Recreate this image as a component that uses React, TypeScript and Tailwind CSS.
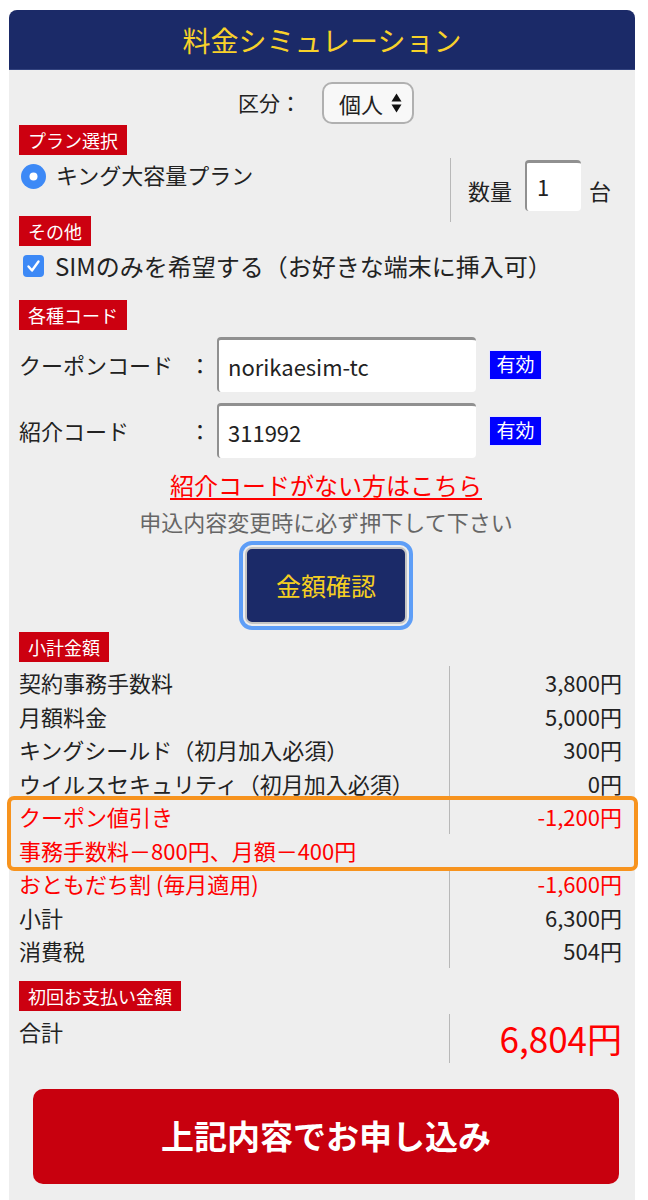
import React from "react";

function Badge({ children }: { children: React.ReactNode }) {
  return (
    <div className="h-[30px] w-fit bg-[#cc0010] px-[9px] text-[18px] leading-[30px] text-white">
      {children}
    </div>
  );
}

function Valid() {
  return (
    <div className="ml-[13px] flex h-[30px] w-[53px] items-center justify-center border border-[#e6e6ff] bg-[#0000ff] text-[19px] text-white">
      有効
    </div>
  );
}

function CodeRow({ label, value }: { label: string; value: string }) {
  return (
    <div className="flex h-[55px] items-center">
      <span className="w-[170px]">{label}</span>
      <span className="w-[22px] text-center">：</span>
      <div className="ml-[6px] flex h-[55px] w-[259px] items-center rounded-[4px] border-t-[3px] border-l-[2px] border-[#909090] bg-white pl-[9px]">
        {value}
      </div>
      <Valid />
    </div>
  );
}

type Row = { label: string; value?: string; red?: boolean; full?: boolean };

function SumRow({ label, value, red, full }: Row) {
  const color = red ? "text-[#ff0000]" : "text-[#222]";
  if (full) {
    return (
      <div className={`flex h-[33.5px] items-center ${color}`}>{label}</div>
    );
  }
  return (
    <div className={`flex h-[33.5px] ${color}`}>
      <div className="flex w-[431px] items-center border-r border-[#b8b8b8]">
        {label}
      </div>
      <div className="flex flex-1 items-center justify-end">{value}</div>
    </div>
  );
}

export default function App() {
  const top: Row[] = [
    { label: "契約事務手数料", value: "3,800円" },
    { label: "月額料金", value: "5,000円" },
    { label: "キングシールド（初月加入必須）", value: "300円" },
    { label: "ウイルスセキュリティ（初月加入必須）", value: "0円" },
  ];
  const bottom: Row[] = [
    { label: "おともだち割 (毎月適用)", value: "-1,600円", red: true },
    { label: "小計", value: "6,300円" },
    { label: "消費税", value: "504円" },
  ];

  return (
    <div className="min-h-[1200px] bg-white pt-[10px] font-['Noto_Sans_CJK_JP',sans-serif] text-[22px] text-[#222]">
      <div className="mx-[9px] w-[626px] rounded-t-[8px] bg-[#eeeeee] pb-[17px]">
        {/* Header */}
        <div className="flex h-[60px] items-center justify-center rounded-t-[8px] border-b border-[#33437f] bg-[#1b2a68] text-[28px] text-[#f8d12a]">
          料金シミュレーション
        </div>

        <div className="pl-[10px] pr-[2px]">
          {/* 区分 */}
          <div className="mt-[12px] flex h-[42px] items-center justify-center">
            <span className="text-[21px]">区分：</span>
            <div className="ml-[21px] flex h-[42px] w-[92px] items-center rounded-[10px] border-2 border-[#b0b0b0] bg-[#f8f8f8] pl-[15px]">
              <span>個人</span>
              <svg className="ml-[8px]" width="11" height="20" viewBox="0 0 11 20">
                <path d="M0.5 8.5 L5.5 0.5 L10.5 8.5 Z" fill="#111" />
                <path d="M0.5 11.5 L10.5 11.5 L5.5 19.5 Z" fill="#111" />
              </svg>
            </div>
          </div>

          {/* プラン選択 */}
          <div className="mt-[1px]">
            <Badge>プラン選択</Badge>
          </div>
          <div className="mt-[3px] flex h-[58px] items-start">
            <div className="flex w-[431px] items-start">
              <svg className="ml-[2px] mt-[6px] shrink-0" width="25" height="25" viewBox="0 0 25 25">
                <circle cx="12.5" cy="12.5" r="12.5" fill="#3d89f6" />
                <circle cx="12.5" cy="12.5" r="4" fill="#fff" />
              </svg>
              <span className="ml-[10px] leading-[33px]">キング大容量プラン</span>
            </div>
            <div className="flex h-[64px] shrink-0 items-center border-l border-[#b8b8b8] pl-[17px]">
              <span>数量</span>
              <div className="ml-[13px] mt-[-10px] flex h-[51px] w-[56px] items-center rounded-[4px] border-t-[3px] border-l-[2px] border-[#909090] bg-white pl-[10px]">
                1
              </div>
              <span className="ml-[8px]">台</span>
            </div>
          </div>

          {/* その他 */}
          <Badge>その他</Badge>
          <div className="mt-[9px] flex h-[22px] items-center">
            <svg className="ml-[4px] shrink-0" width="21" height="22" viewBox="0 0 21 22">
              <rect x="0" y="0" width="21" height="22" rx="4" fill="#3d89f6" />
              <path d="M5.5 11.5 L9 15.5 L15.5 6.5" stroke="#fff" strokeWidth="2.4" fill="none" strokeLinecap="round" strokeLinejoin="round" />
            </svg>
            <span className="ml-[11px] text-[24px]">SIMのみを希望する（お好きな端末に挿入可）</span>
          </div>

          {/* 各種コード */}
          <div className="mt-[23px]">
            <Badge>各種コード</Badge>
          </div>
          <div className="mt-[7px]">
            <CodeRow label="クーポンコード" value="norikaesim-tc" />
          </div>
          <div className="mt-[11px]">
            <CodeRow label="紹介コード" value="311992" />
          </div>

          <div className="mt-[10px] text-center text-[24px] leading-[33px] text-[#ff0000] underline underline-offset-[3px]">
            紹介コードがない方はこちら
          </div>
          <div className="mt-[4px] text-center leading-[33px] text-[#666]">
            申込内容変更時に必ず押下して下さい
          </div>
          <div className="mt-[9px] flex justify-center">
            <button className="h-[77px] w-[162px] rounded-[7px] border-2 border-[#c4c4c4] bg-[#1b2a68] text-[25px] text-[#f5cf22] outline-4 outline-offset-[2px] outline-[#5e9ef7]">
              金額確認
            </button>
          </div>

          {/* 小計金額 */}
          <div className="mt-[8px]">
            <Badge>小計金額</Badge>
          </div>
          <div className="mt-[4px] pr-[11px]">
            {top.map((r) => (
              <SumRow key={r.label} {...r} />
            ))}
          </div>
          <div className="-ml-[8px] -mr-[1px] rounded-[3px] pl-[8px] pr-[12px] outline-4 outline-[#f7931e]">
            <SumRow label="クーポン値引き" value="-1,200円" red />
            <SumRow label="事務手数料－800円、月額－400円" red full />
          </div>
          <div className="pr-[11px]">
            {bottom.map((r) => (
              <SumRow key={r.label} {...r} />
            ))}
          </div>

          {/* 初回お支払い金額 */}
          <div className="mt-[13px]">
            <Badge>初回お支払い金額</Badge>
          </div>
          <div className="mt-[3px] flex h-[49px] pr-[11px]">
            <div className="w-[431px] border-r border-[#b8b8b8] pt-[1px] leading-[33px]">合計</div>
            <div className="flex flex-1 items-center justify-end text-[35px] text-[#ff0000]">6,804円</div>
          </div>

          <button className="mx-[14px] mt-[26px] flex h-[95px] w-[586px] items-center justify-center rounded-[10px] bg-[#c8000e] text-[33px] font-bold text-white">
            上記内容でお申し込み
          </button>
        </div>
      </div>
    </div>
  );
}
